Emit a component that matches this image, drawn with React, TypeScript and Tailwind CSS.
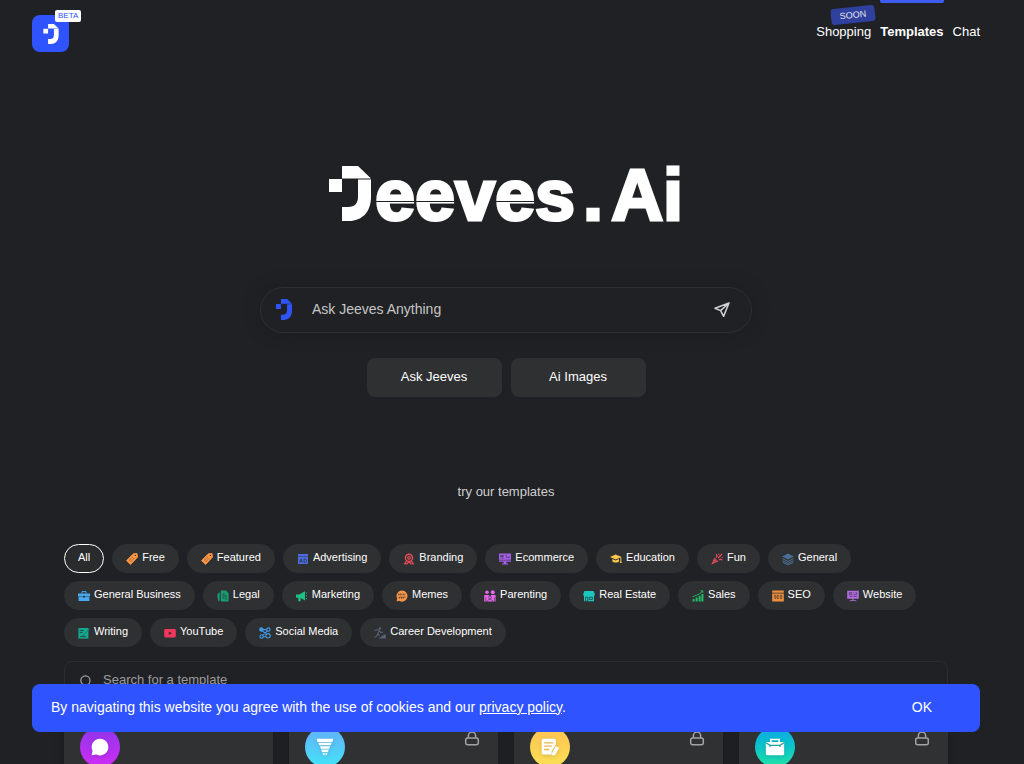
import { clsx } from "clsx";
import type { ReactNode } from "react";

const tag = (
  <>
    <path d="M7.5 0.8 11 0.6 11.4 4.2 4.6 11.4 0.6 7.6Z" strokeWidth="1" strokeLinejoin="round" stroke="currentColor" />
    <path d="M3 7.6 7 3.8M4.6 8.8 8.4 5" stroke="#2f3032" strokeWidth="0.6" strokeDasharray="1.2 0.5" />
    <circle cx="9.4" cy="2.4" r="0.7" fill="#2f3032" />
  </>
);

const categories: { name: string; color?: string; icon?: ReactNode }[] = [
  { name: "All" },
  { name: "Free", color: "text-[#fd9644]", icon: tag },
  { name: "Featured", color: "text-[#fd9644]", icon: tag },
  {
    name: "Advertising",
    color: "text-[#4b6bdf]",
    icon: (
      <>
        <path d="M1 1h10v2H1zM1 3.6h10V11H1z" />
        <path d="M2.5 9.5 4 5.8l1.4 3.7M3 8.3h2M7 6v3.4h1c2 0 2-3.4 0-3.4z" stroke="#2f3032" strokeWidth="0.7" fill="none" />
      </>
    ),
  },
  {
    name: "Branding",
    color: "text-[#eb4d5b]",
    icon: (
      <g fill="none" stroke="currentColor">
        <circle cx="6" cy="4.8" r="3.6" strokeWidth="1.4" />
        <circle cx="6" cy="4.8" r="1.3" strokeWidth="1.2" />
        <path d="M3.6 8 1.6 10.8l2.2.2M8.4 8l2 2.8-2.2.2M3.8 11 6 8.6 8.2 11" strokeWidth="1.2" />
      </g>
    ),
  },
  {
    name: "Ecommerce",
    color: "text-[#a55eea]",
    icon: (
      <>
        <path d="M0 .5h12v8.2H0zM4.6 8.7h2.8v1.8h1.8v1H2.8v-1h1.8z" />
        <path d="M1.5 2.5h3v1h-3zM1.5 5h3M6.4 2h.8l.6 2.6h2.2l.4-1.6M0 7.2h12" stroke="#2f3032" strokeWidth="0.6" fill="none" />
      </>
    ),
  },
  {
    name: "Education",
    color: "text-[#fbc94a]",
    icon: (
      <path d="M0 4 5.6 1.4 11.6 4 5.6 6.4ZM2.4 6 5.6 7.4 9 6v2.4c-1.6 1.4-5 1.4-6.6 0zM10.4 4.4h.9v3l.5 2.6h-1.9l.5-2.6z" />
    ),
  },
  {
    name: "Fun",
    color: "text-[#eb4d5b]",
    icon: (
      <>
        <path d="M.4 11.6 3.4 4.6 7.4 8.6Z" />
        <path d="M2.4 8 4.4 10M3.4 6 6 8.6" stroke="#2f3032" strokeWidth="0.6" />
        <path d="M5 4.6C6.4 3.6 6 2.2 5.2 1M7.2 5 11 1M8 7c1.2-1.2 2.4-.6 3.4 0M8 1v1M11 4v1" stroke="currentColor" strokeWidth="1.1" fill="none" />
      </>
    ),
  },
  {
    name: "General",
    color: "text-[#4b6f94]",
    icon: (
      <>
        <path d="M6 .6 11.8 3.6 6 6.6.2 3.6Z" />
        <path d="M.4 5.6 6 8.4l5.6-2.8M.4 7.6 6 10.4l5.6-2.8M.8 9.4 6 11.8l5.2-2.4" stroke="currentColor" strokeWidth="1" fill="none" />
      </>
    ),
  },
  {
    name: "General Business",
    color: "text-[#45aaf2]",
    icon: (
      <>
        <path d="M0 3.4h12v3H0zM.6 7h10.8v4H.6z" />
        <path d="M4 3.4V1.6h4v1.8" stroke="currentColor" fill="none" />
        <path d="M5.2 5.8h1.6v2H5.2z" fill="#2f3032" />
      </>
    ),
  },
  {
    name: "Legal",
    color: "text-[#199c74]",
    icon: (
      <>
        <path d="M4 .6h5l2.6 2.6v8.2H4zM1 3h1.6v7L1.8 11.6 1 10z" />
        <path d="M5.4 4h2.4M5.4 6h4.6M5.4 8h2M9 7.4v2.4" stroke="#2f3032" strokeWidth="0.8" />
        <path d="M.5 4v4M3 1.6V11" stroke="currentColor" strokeWidth="0.5" />
      </>
    ),
  },
  {
    name: "Marketing",
    color: "text-[#1fbf86]",
    icon: (
      <>
        <path d="M0 4.4h3L9 1.2v9.2L4.6 8v3.2H2.2V7.8H0z" />
        <path d="M10.4 2.4v1.2M10.4 5.2v1.2M10.4 8v1.2" stroke="currentColor" strokeWidth="1" />
      </>
    ),
  },
  {
    name: "Memes",
    color: "text-[#fd9644]",
    icon: (
      <>
        <path d="M6 .4a5.6 5.6 0 1 1-3 10.4L.6 11.6l.6-3A5.6 5.6 0 0 1 6 .4" />
        <path d="M2.6 5.4V3.6l1 1 1-1v1.8M6 3.6v1.8M7.4 5.4V3.4M9 5.4V3.6M2.4 7.2h7.4M3.4 7.2v1.6M5.4 7.2v2M7.4 7.2v1.6" stroke="#2f3032" strokeWidth="0.6" fill="none" />
      </>
    ),
  },
  {
    name: "Parenting",
    color: "text-[#e667ee]",
    icon: (
      <>
        <circle cx="3" cy="2.2" r="1.8" />
        <circle cx="8.8" cy="2.2" r="2" />
        <path d="M.2 5h4.6l1.2 1.6L7.2 5h4.4v6.4H.2z" />
        <circle cx="6" cy="7.4" r="1.4" stroke="#2f3032" strokeWidth="0.6" />
        <path d="M3.4 11.6c0-3 5.2-3 5.2 0M1.8 7.4v4M10.4 7.4v4" stroke="#2f3032" strokeWidth="0.6" fill="none" />
      </>
    ),
  },
  {
    name: "Real Estate",
    color: "text-[#18c5bf]",
    icon: (
      <>
        <path d="M1.4 1h9.2L11.8 4v1.4H.2V4zM1 5.4h10v5.8H1z" />
        <path d="M2.6 7.2h2.2v4H2.6zM6.2 7.2h3.2v2.2H6.2z" stroke="#2f3032" strokeWidth="0.7" fill="none" />
      </>
    ),
  },
  {
    name: "Sales",
    color: "text-[#20bf6b]",
    icon: (
      <>
        <path d="M.6 9h2v2.6h-2zM3.6 7.4h2v4.2h-2zM6.6 5.8h2v5.8h-2zM9.4 4h2v7.6h-2z" />
        <path d="M.4 6.8 4 5.4l3-1.2L10.6 1M8.4.8h2.4V3" stroke="currentColor" strokeWidth="0.9" fill="none" />
      </>
    ),
  },
  {
    name: "SEO",
    color: "text-[#ef8f3c]",
    icon: (
      <>
        <path d="M.2.6h11.6v2.2H.2zM.2 3.4h11.6v8.2H.2z" />
        <path d="M4.2 5.4H2.4v1.4H4v1.6H2.2M7 5.4H5.2v3H7M5.2 6.8h1.6M8.2 5.4h1.6v3H8.2z" stroke="#2f3032" strokeWidth="0.6" fill="none" />
      </>
    ),
  },
  {
    name: "Website",
    color: "text-[#b06be0]",
    icon: (
      <>
        <path d="M.2.8h11.6v8H.2zM5.4 8.8h1.2v1.4h2.6v1.4l-1-.6H3.8l-1 .6v-1.4h2.6z" />
        <path d="M2.4 2.6h2.4v2H2.4zM6.4 2.6h1M8.6 2.6h1v2H6.6M2.4 6.4h3M6.6 6.4h3" stroke="#2f3032" strokeWidth="0.6" fill="none" />
      </>
    ),
  },
  {
    name: "Writing",
    color: "text-[#12a892]",
    icon: (
      <>
        <path d="M.4 1h10v10.6H.4z" />
        <path d="M1.8 3.4h4M1.8 5.4h3M5 8.6l6.4-7M2 9.6h6" stroke="#2f3032" strokeWidth="0.8" />
        <path d="m6 7.8 5.6-6.2" stroke="currentColor" strokeWidth="0.9" />
      </>
    ),
  },
  {
    name: "YouTube",
    color: "text-[#f5365c]",
    icon: (
      <>
        <rect x="0.2" y="2" width="11.6" height="8.4" rx="1.4" />
        <path d="M4.8 4.4 8 6.2 4.8 8z" fill="#2f3032" />
      </>
    ),
  },
  {
    name: "Social Media",
    color: "text-[#4299e6]",
    icon: (
      <g fill="none" stroke="currentColor" strokeWidth="1.1">
        <circle cx="2.4" cy="2.6" r="1.7" fill="currentColor" />
        <circle cx="9.4" cy="2.6" r="1.7" />
        <circle cx="2.6" cy="9.4" r="1.7" />
        <circle cx="9" cy="8.8" r="2.2" />
        <path d="M3.6 4 7.4 7.4M8.2 4 4 8M4 2.6h3.6M4.4 9.8h2.4" />
      </g>
    ),
  },
  {
    name: "Career Development",
    color: "text-[#566477]",
    icon: (
      <>
        <circle cx="6" cy="1.4" r="1.2" />
        <path d="M.6 3.8 3 2.6l2.4 1.2L3.6 7l2 1.6M3.6 7 2.4 9.4.4 10.6M5.4 3.8l1.4 1.6h2" stroke="currentColor" strokeWidth="1.1" fill="none" />
        <path d="M5.4 11.6v-1.4h2V8.8h2V7.4h2.4v4.2z" />
      </>
    ),
  },
];

const templates = [
  {
    name: "Chat",
    gradient: "from-[#8e33ea] to-[#d02af6]",
    locked: false,
    icon: <path d="M12 2a10 10 0 1 1-4.4 19L2 22l1-5.6A10 10 0 0 1 12 2" />,
  },
  {
    name: "Funnel",
    gradient: "from-[#62aef8] to-[#3fe4f8]",
    locked: true,
    icon: (
      <path d="M2 2h20l-1 4H3zM4 7h16l-1 3H5zM6 11h12l-1 3H7zM7.4 15h9.2l-1 3H8.4zM9 19h2.4v3H10zM12.6 19H15l-1 3h-1.4z" />
    ),
  },
  {
    name: "Article",
    gradient: "from-[#fdc253] to-[#fbe055]",
    locked: true,
    icon: (
      <>
        <path d="M4 2h13q2 0 2 2v5l-5 8v4H4q-2 0-2-2V4q0-2 2-2" />
        <path d="M5 7h11M5 11h9M5 15h6" stroke="#e6b64a" strokeWidth="1.6" />
        <path d="m19 11 4 2-5 9h-4l1-4z" />
      </>
    ),
  },
  {
    name: "Business",
    gradient: "from-[#14a5e6] to-[#22e3a4]",
    locked: true,
    icon: (
      <>
        <path d="M1 6h22v14q0 2-2 2H3q-2 0-2-2z" />
        <path d="M7 6V3h10v3" stroke="white" strokeWidth="2" fill="none" />
        <path d="m1 7 5 3h12l5-3M6 9v3M18 9v3" stroke="#1d9f9b" strokeWidth="1.4" fill="none" />
      </>
    ),
  },
];

function JeevesMark({ className }: { className: string }) {
  return (
    <svg viewBox="0 0 42 55" fill="currentColor" className={className} aria-hidden="true">
      <path d="M0 13h13v13H0zM13 0h16l13 12.6H13z" />
      <path d="M29 13.4h13V31c0 15-9 24-22 24h-7V41h6c7 0 10-4 10-10z" />
    </svg>
  );
}

function Header() {
  return (
    <header className="flex justify-between px-8">
      <a href="#" aria-label="Jeeves home" className="relative mt-[15px] flex size-[37px] items-center justify-center rounded-lg bg-[#2f54ff]">
        <JeevesMark className="h-5 w-4 text-white" />
        <span className="absolute -top-[5px] left-[23px] rounded-xs bg-white px-[3px] text-[8px] leading-[12px] text-[#2f54ff]">
          BETA
        </span>
      </a>
      <nav className="flex gap-[9px] text-[13px]">
        <a href="#" className="relative pt-[22px]">
          Shopping
          <span className="absolute top-[7px] left-[15px] w-11 -rotate-6 rounded-[3px] bg-[#2f409f] text-center text-[9px] leading-[16px] text-gray-200">
            SOON
          </span>
        </a>
        <a href="#" className="relative pt-[22px] font-bold">
          <span className="absolute inset-x-0 top-0 h-[3px] rounded-b-xs bg-[#3f5cf0]" />
          Templates
        </a>
        <a href="#" className="pt-[22px]">
          Chat
        </a>
      </nav>
    </header>
  );
}

// stencil cut through the crossbars
function Slit({ children }: { children: ReactNode }) {
  return (
    <span className="relative">
      {children}
      <span className="absolute inset-x-0 top-[35px] h-px bg-[#202124]" />
    </span>
  );
}

function Wordmark() {
  return (
    <h1 className="mt-[114px] flex h-14 justify-center text-[72px] leading-[58px] font-bold [-webkit-text-stroke:3px_white]">
      <JeevesMark className="mr-1 h-[55px] w-[42px]" />
      <Slit>ee</Slit>
      <span>v</span>
      <Slit>e</Slit>
      <span>s</span>
      <span className="ml-2">.</span>
      <span className="ml-2">Ai</span>
    </h1>
  );
}

function AskBox() {
  return (
    <form className="mx-auto mt-[65px] flex h-[46px] w-full max-w-[492px] items-center rounded-full border border-[#2e2f30] px-[15px] pb-[2px] shadow-[0_0_14px_2px_#1d1e20]">
      <JeevesMark className="h-[21px] w-4 text-[#2f54ff]" />
      <input
        aria-label="Ask Jeeves Anything"
        placeholder="Ask Jeeves Anything"
        className="ml-5 min-w-0 flex-1 bg-transparent text-[14px] outline-none placeholder:text-[#c6c6c7]"
      />
      <button type="button" aria-label="Send" className="mr-[6px]">
        <svg viewBox="0 0 16 16" className="size-4" fill="none" stroke="#d0d0d0" strokeWidth="1.5" strokeLinejoin="round">
          <path d="M15 2 1 7.2l5.6 2.4L9.6 15.4ZM15 2 6.6 9.6" />
        </svg>
      </button>
    </form>
  );
}

function Categories() {
  return (
    <div className="mt-[42px] flex flex-wrap gap-2">
      {categories.map((category) => (
        <button
          key={category.name}
          className={clsx(
            "flex h-[29px] items-center gap-1 rounded-full border px-[13px] text-[11px]",
            category.icon ? "border-[#2f3032] bg-[#2f3032]" : "border-white bg-[#2a2b2d]",
          )}
        >
          {category.icon && (
            <svg viewBox="0 0 12 12" fill="currentColor" className={clsx("size-3", category.color)}>
              {category.icon}
            </svg>
          )}
          <span className="pb-[2px]">{category.name}</span>
        </button>
      ))}
    </div>
  );
}

function Lock() {
  return (
    <svg viewBox="0 0 16 20" className="h-5 w-4" fill="none" stroke="#a3a3a4" strokeWidth="1.5">
      <rect x="1.7" y="11" width="12.6" height="6.8" rx="2" />
      <path d="M4.4 11V8.6a3.6 3.6 0 0 1 7.2 0V11" />
    </svg>
  );
}

export default function App() {
  return (
    <div className="h-screen overflow-hidden bg-[#202124] pr-3 font-['Liberation_Sans',Arial,sans-serif] text-white">
      <Header />
      <main className="px-16">
        <Wordmark />
        <AskBox />
        <div className="mt-[25px] flex justify-center gap-[9px] text-[13px]">
          <button className="h-[39px] w-[135px] rounded-lg bg-[#2f3032] pb-[2px]">Ask Jeeves</button>
          <button className="h-[39px] w-[135px] rounded-lg bg-[#2f3032] pb-[2px]">Ai Images</button>
        </div>
        <p className="mt-[85px] text-center text-[13px] leading-5 text-[#cfcfd0]">try our templates</p>
        <Categories />
        <div className="mt-[14px] flex h-10 items-center rounded-lg border border-[#2c2d2f] px-[15px]">
          <svg viewBox="0 0 12 12" className="size-3" fill="none" stroke="#a3a3a4" strokeWidth="1.2">
            <circle cx="5.4" cy="5.4" r="4.6" />
            <path d="m9 9 2.6 2.6" />
          </svg>
          <input
            aria-label="Search for a template"
            placeholder="Search for a template"
            className="ml-[11px] flex-1 bg-transparent pb-[2px] text-[13px] outline-none placeholder:text-[#9b9b9d]"
          />
        </div>
        <div className="mt-[10px] grid grid-cols-4 gap-4">
          {templates.map((template) => (
            <article key={template.name} className="flex h-40 items-start justify-between rounded-lg bg-[#303133] p-4 pr-[18px] shadow-[0_0_10px_#1b1c1e]">
              <div className={clsx("flex size-10 items-center justify-center rounded-full bg-linear-to-b", template.gradient)}>
                <svg viewBox="0 0 24 24" fill="white" className="size-5 drop-shadow-sm">
                  {template.icon}
                </svg>
              </div>
              {template.locked && <Lock />}
            </article>
          ))}
        </div>
      </main>
      <div className="fixed right-11 bottom-8 left-8 flex h-12 items-center justify-between rounded-lg bg-[#2f54ff] pr-12 pb-[2px] pl-[19px] text-[14px]">
        <p>
          By navigating this website you agree with the use of cookies and our{" "}
          <a href="#" className="underline">
            privacy policy
          </a>
          .
        </p>
        <button>OK</button>
      </div>
    </div>
  );
}
